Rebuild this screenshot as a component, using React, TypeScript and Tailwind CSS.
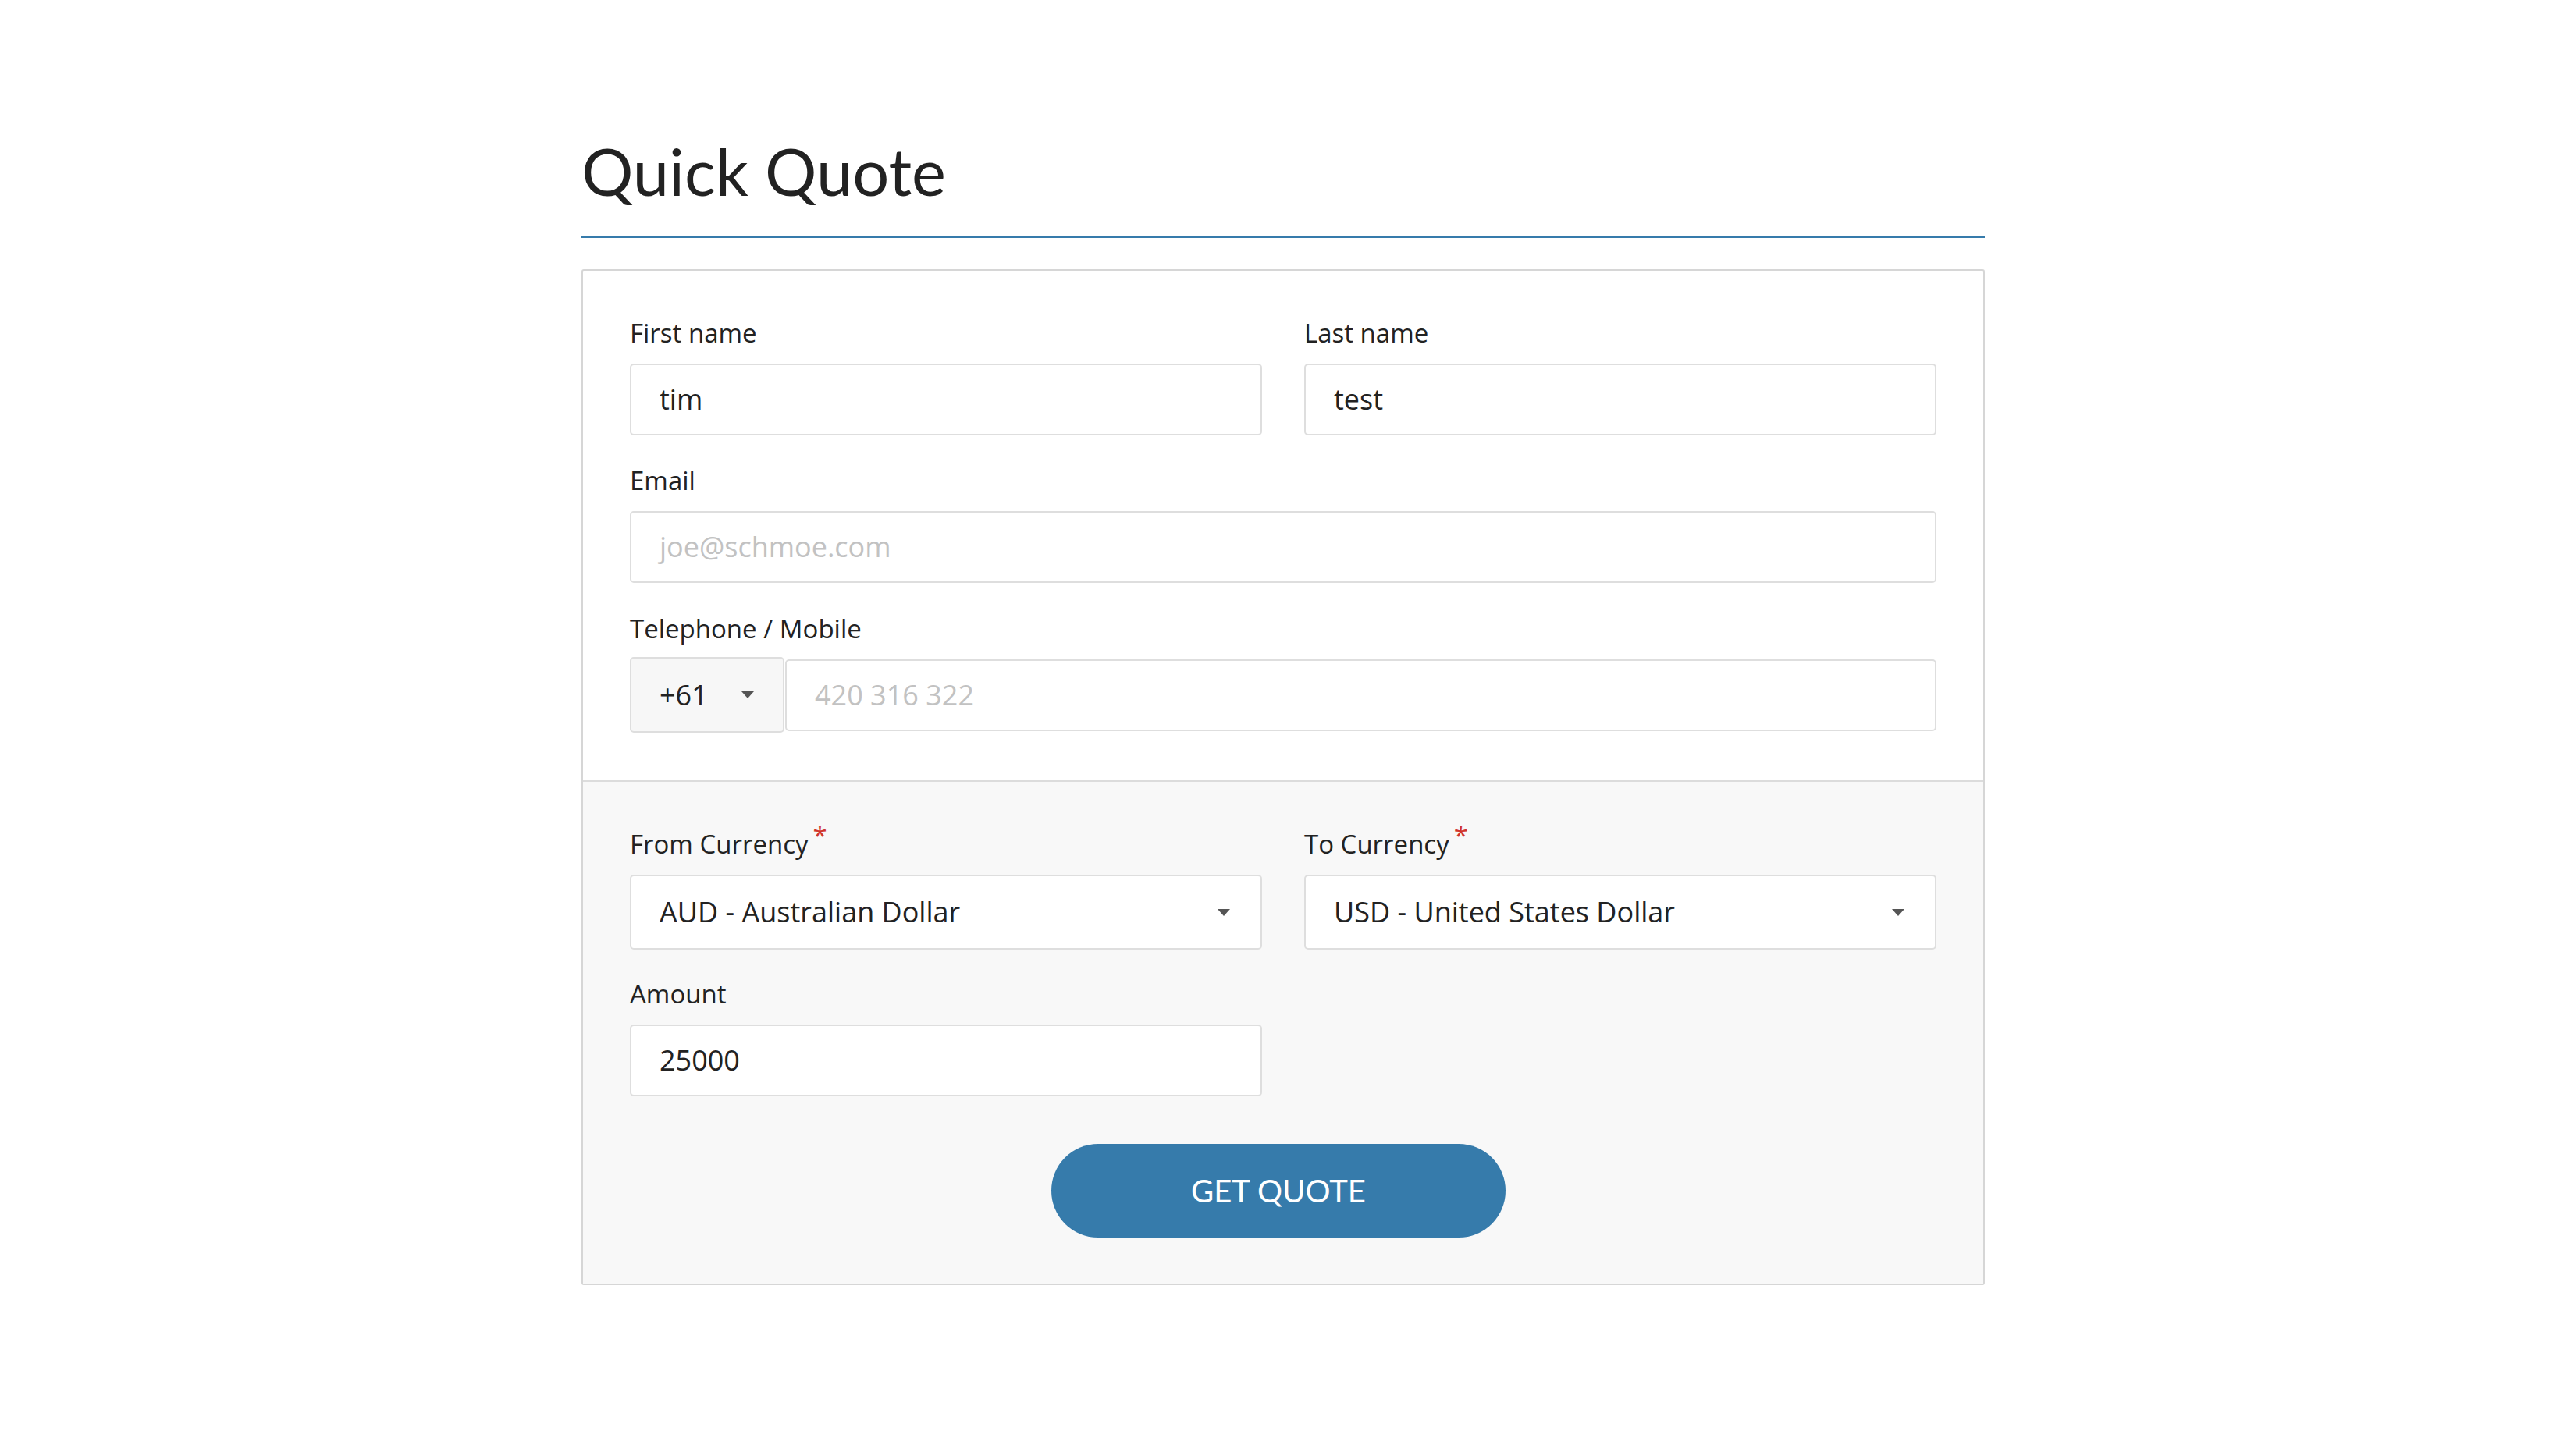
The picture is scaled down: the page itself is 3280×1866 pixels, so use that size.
import React from "react";

function Caret() {
  return (
    <svg width="16" height="9" viewBox="0 0 16 9" className="shrink-0">
      <path d="M0 0 L16 0 L8 9 Z" fill="#555555" />
    </svg>
  );
}

function Label({ text, required }: { text: string; required?: boolean }) {
  return (
    <label className="mb-[17px] block h-[44px] text-[33px] leading-[44px] text-[#222]">
      {text}
      {required && (
        <span className="relative -top-[11px] ml-[6px] text-[#d0342c]">*</span>
      )}
    </label>
  );
}

function TextBox({ value, placeholder }: { value?: string; placeholder?: string }) {
  return (
    <div className="flex h-[92px] items-center rounded-[5px] border-2 border-[#dedede] bg-white px-[36px] text-[36px]">
      {value ? (
        <span className="text-[#222]">{value}</span>
      ) : (
        <span className="text-[#c2c2c2]">{placeholder}</span>
      )}
    </div>
  );
}

function SelectBox({ value }: { value: string }) {
  return (
    <div className="flex h-[96px] items-center justify-between rounded-[5px] border-2 border-[#dedede] bg-white pl-[36px] pr-[39px] text-[36px] text-[#222]">
      <span>{value}</span>
      <Caret />
    </div>
  );
}

export default function App() {
  return (
    <div
      className="min-h-screen bg-white pl-[8px]"
      style={{ fontFamily: '"Open Sans", "Liberation Sans", sans-serif' }}
    >
      <div className="mx-auto w-[1798px] pt-[177px]">
        <h1
          className="h-[84px] text-[83px] leading-[84px] font-normal text-[#222]"
          style={{ fontFamily: 'Lato, "Liberation Sans", sans-serif' }}
        >
          Quick Quote
        </h1>
        <div className="mt-[41px] h-[3px] bg-[#367bab]" />

        <div className="mt-[40px] rounded-[3px] border-2 border-[#d6d6d6]">
          <div className="px-[60px] pt-[58px] pb-[61px]">
            <div className="grid grid-cols-2 gap-x-[54px]">
              <div>
                <Label text="First name" />
                <TextBox value="tim" />
              </div>
              <div>
                <Label text="Last name" />
                <TextBox value="test" />
              </div>
            </div>

            <div className="mt-[36px]">
              <Label text="Email" />
              <TextBox placeholder="joe@schmoe.com" />
            </div>

            <div className="mt-[37px]">
              <label className="mb-[14px] block h-[44px] text-[33px] leading-[44px] text-[#222]">
                Telephone / Mobile
              </label>
              <div className="flex items-center">
                <div className="flex h-[97px] w-[198px] shrink-0 items-center justify-between rounded-[5px] border-2 border-[#dedede] bg-[#f7f7f7] pl-[36px] pr-[37px] text-[36px] text-[#222]">
                  <span>+61</span>
                  <Caret />
                </div>
                <div className="ml-[1px] flex-1">
                  <TextBox placeholder="420 316 322" />
                </div>
              </div>
            </div>
          </div>

          <div className="border-t-2 border-[#dcdcdc] bg-[#f8f8f8] px-[60px] pt-[58px] pb-[59px]">
            <div className="grid grid-cols-2 gap-x-[54px]">
              <div>
                <Label text="From Currency" required />
                <SelectBox value="AUD - Australian Dollar" />
              </div>
              <div>
                <Label text="To Currency" required />
                <SelectBox value="USD - United States Dollar" />
              </div>
            </div>

            <div className="mt-[35px] grid grid-cols-2 gap-x-[54px]">
              <div>
                <Label text="Amount" />
                <TextBox value="25000" />
              </div>
            </div>

            <div className="mt-[61px] flex justify-center pr-[12px]">
              <button
                className="h-[120px] w-[582px] rounded-full bg-[#367bab] text-[40px] text-white"
                style={{ fontFamily: 'Lato, "Liberation Sans", sans-serif' }}
              >
                GET QUOTE
              </button>
            </div>
          </div>
        </div>
      </div>
    </div>
  );
}
